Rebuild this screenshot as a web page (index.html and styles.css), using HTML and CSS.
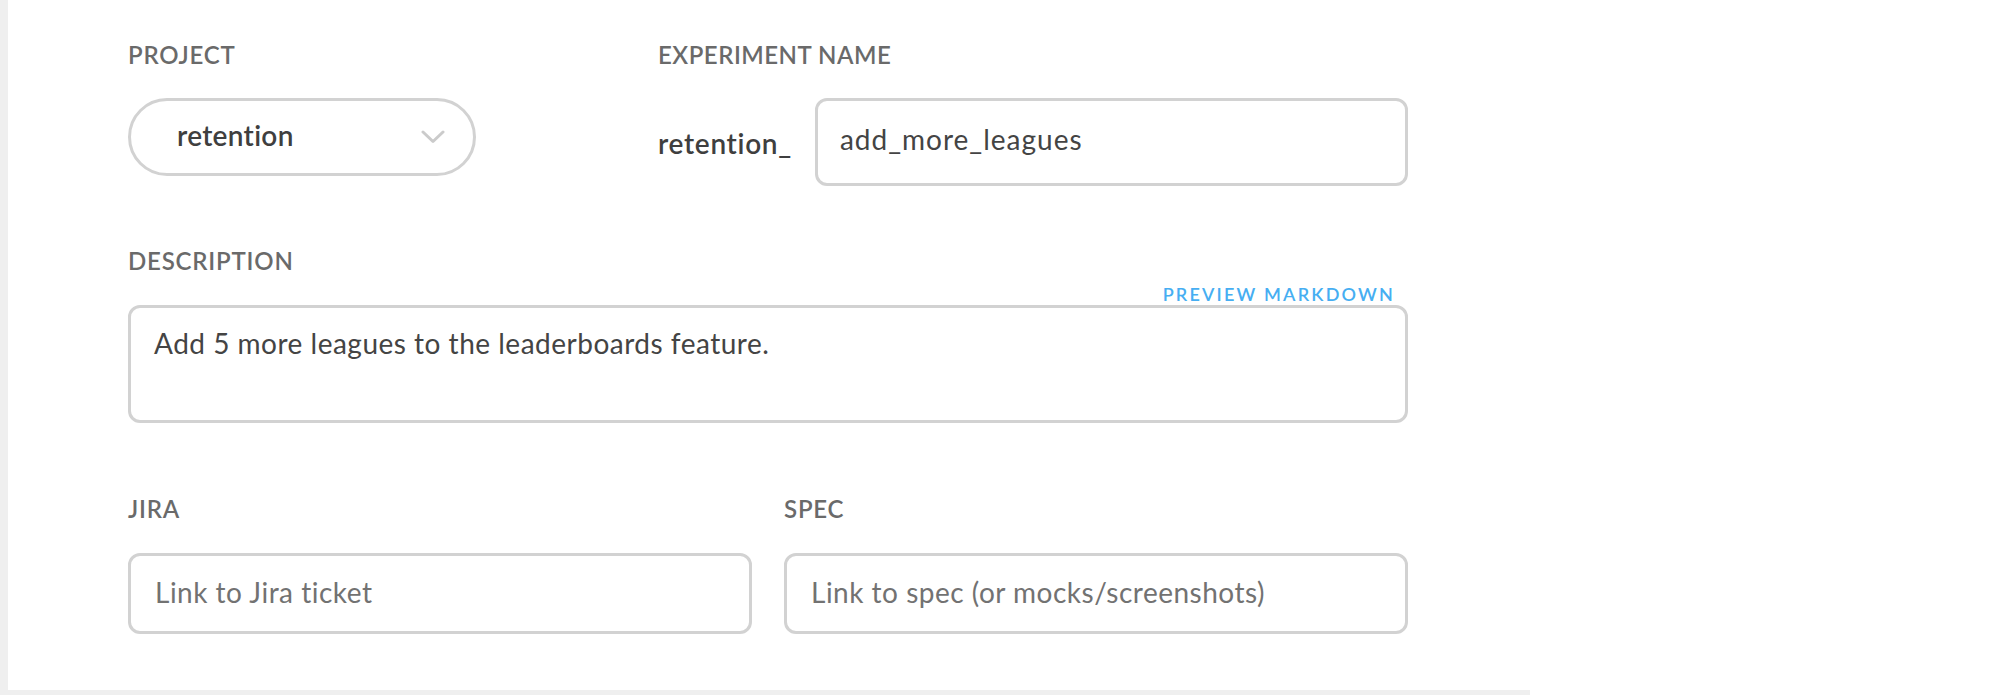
FILE: index.html
```html
<!DOCTYPE html>
<html lang="en">
<head>
<meta charset="utf-8">
<title>New experiment</title>
<link rel="stylesheet" href="styles.css">
</head>
<body>
<div class="app">
  <main class="card">
    <form class="form">
      <div class="row row-top">
        <div class="field field-project">
          <label class="label">PROJECT</label>
          <div class="select">
            <span class="select-value">retention</span>
            <svg class="chevron" width="24" height="14" viewBox="0 0 24 14" aria-hidden="true">
              <polyline points="2,2 12,11.5 22,2" fill="none" stroke="#cbcbcb" stroke-width="3" stroke-linecap="round" stroke-linejoin="round"/>
            </svg>
          </div>
        </div>
        <div class="field field-name">
          <label class="label">EXPERIMENT NAME</label>
          <div class="name-row">
            <span class="prefix">retention_</span>
            <input class="input input-name" type="text" value="add_more_leagues">
          </div>
        </div>
      </div>

      <div class="field field-desc">
        <div class="desc-head">
          <label class="label">DESCRIPTION</label>
          <a class="preview-link" href="#">PREVIEW MARKDOWN</a>
        </div>
        <textarea class="textarea">Add 5 more leagues to the leaderboards feature.</textarea>
      </div>

      <div class="row row-links">
        <div class="field field-half">
          <label class="label">JIRA</label>
          <input class="input input-link" type="text" placeholder="Link to Jira ticket">
        </div>
        <div class="field field-half">
          <label class="label">SPEC</label>
          <input class="input input-link" type="text" placeholder="Link to spec (or mocks/screenshots)">
        </div>
      </div>
    </form>
  </main>
</div>
</body>
</html>
```

FILE: styles.css
```css
* { box-sizing: border-box; }

html, body {
  margin: 0;
  padding: 0;
  background: #ffffff;
  font-family: Lato, "Open Sans", "Liberation Sans", sans-serif;
}

.app {
  width: 1530px;
  height: 695px;
  background: #efefef;
  padding: 0 0 5px 8px;
}

.card {
  background: #ffffff;
  height: 690px;
  padding: 40px 0 0 120px;
}

.form {
  width: 1280px;
  display: flex;
  flex-direction: column;
}

.row {
  display: flex;
}

.field {
  display: flex;
  flex-direction: column;
}

.label {
  display: block;
  font-size: 24px;
  line-height: 30px;
  font-weight: 600;
  color: #6a6a6a;
  letter-spacing: 0.8px;
}

/* Row 1 */
.field-project {
  width: 348px;
}

.field-project .label,
.field-name .label {
  margin-bottom: 28px;
}

.field-name .label {
  letter-spacing: 0.5px;
}

.select {
  height: 78px;
  border: 3px solid #d2d2d2;
  border-radius: 39px;
  display: flex;
  align-items: center;
  justify-content: space-between;
  padding: 0 28px 4px 46px;
}

.select-value {
  font-size: 28px;
  font-weight: 600;
  color: #3f3f3f;
  letter-spacing: 0.3px;
}

.chevron {
  display: block;
  margin-top: 4px;
}

.field-name {
  margin-left: 182px;
  flex: 1;
}

.name-row {
  display: flex;
  align-items: center;
  gap: 23px;
}

.prefix {
  font-size: 28px;
  font-weight: 600;
  color: #3f3f3f;
  letter-spacing: 0.7px;
  padding-top: 2px;
}

.input {
  font-family: Lato, "Open Sans", "Liberation Sans", sans-serif;
  font-size: 28px;
  letter-spacing: 0.5px;
  color: #444444;
  background: #ffffff;
  border: 3px solid #d2d2d2;
  border-radius: 12px;
  outline: none;
  margin: 0;
}

.input-name {
  flex: 1;
  height: 88px;
  padding: 0 22px 7px 22px;
  letter-spacing: 1px;
}

/* Row 2 */
.field-desc {
  margin-top: 60px;
}

.desc-head {
  display: flex;
  justify-content: space-between;
  align-items: flex-end;
  height: 59px;
}

.desc-head .label {
  align-self: flex-start;
}

.preview-link {
  font-size: 18px;
  line-height: 18px;
  font-weight: 600;
  letter-spacing: 2.2px;
  color: #46aef2;
  text-decoration: none;
  margin: 0 13px 2px 0;
}

.textarea {
  display: block;
  width: 100%;
  height: 118px;
  font-family: Lato, "Open Sans", "Liberation Sans", sans-serif;
  font-size: 28px;
  letter-spacing: 0.5px;
  line-height: 1.2;
  color: #444444;
  border: 3px solid #d2d2d2;
  border-radius: 12px;
  padding: 19px 23px 0 23px;
  margin: 0;
  resize: none;
  outline: none;
}

/* Row 3 */
.row-links {
  margin-top: 71px;
  gap: 32px;
}

.field-half {
  flex: 1;
}

.field-half .label {
  margin-bottom: 29px;
}

.input-link {
  height: 81px;
  padding: 0 24px 4px 24px;
}

.input-link::placeholder {
  color: #727272;
  opacity: 1;
}
```
